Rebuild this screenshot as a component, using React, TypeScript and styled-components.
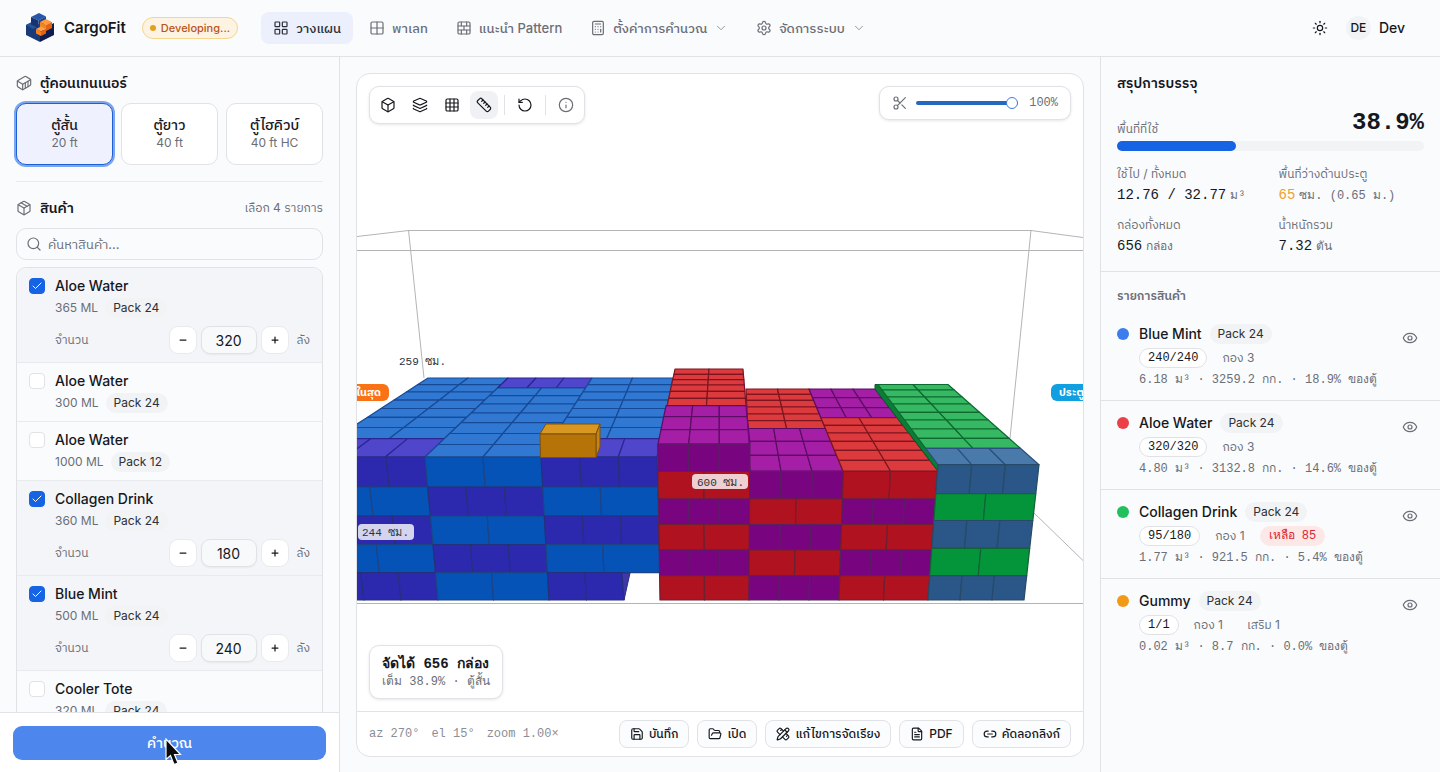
import React from "react";
import styled, { createGlobalStyle, css } from "styled-components";
import {
  Box, BrickWall, Calculator, Check, ChevronDown, Container, Eye, FileText, FolderOpen, Grid2x2, Grid3x3,
  Info, Layers, LayoutGrid, Link2, Minus, Package, PencilRuler, Plus, RotateCcw, Ruler, Save, Scissors,
  Search, Settings, Sun,
} from "lucide-react";

const sans = `Inter, "IBM Plex Sans Thai", "Noto Sans Thai", "Noto Sans", "Loma", sans-serif`;
const mono = `"Liberation Mono", "Tlwg Mono", "FreeMono", "DejaVu Sans Mono", monospace`;

const c = {
  ink: "#16181d",
  muted: "#6a6e76",
  line: "#e0e2e6",
  soft: "#e8eaee",
  chip: "#f2f3f5",
  panel: "#fafbfd",
  blue: "#1664e3",
};

const GlobalStyle = createGlobalStyle`
  *, *::before, *::after { box-sizing: border-box; }
  body { margin: 0; background: ${c.panel}; color: ${c.ink}; font: 400 14px/20px ${sans}; }
  button, input { font: inherit; color: inherit; margin: 0; }
  button { cursor: pointer; }
  h1, h2, h3, p, ul, dl, dd { margin: 0; padding: 0; }
  svg { flex: none; }
`;

const Page = styled.div`
  display: grid;
  grid-template: auto minmax(0, 1fr) / 340px minmax(0, 1fr) 340px;
  height: 100vh;
`;

/* ---------- header ---------- */
const Header = styled.header`
  grid-column: 1 / -1;
  display: flex;
  align-items: center;
  height: 57px;
  padding: 0 35px 0 24px;
  border-bottom: 1px solid ${c.line};
`;
const Brand = styled.a`
  display: flex;
  align-items: center;
  gap: 8px;
  color: ${c.ink};
  font: 600 15px/24px ${sans};
  text-decoration: none;
`;
const StageBadge = styled.span`
  display: flex;
  align-items: center;
  gap: 5px;
  height: 22px;
  margin: 0 23px 0 16px;
  padding: 0 7px;
  border: 1px solid #f6d58c;
  border-radius: 11px;
  background: #fdf3e3;
  color: #b9541a;
  font-size: 11px;
  font-weight: 500;
  &::before { content: ""; width: 6px; height: 6px; border-radius: 50%; background: #e2a01c; }
`;
const Nav = styled.nav`
  display: flex;
  gap: 4px;
  flex: 1;
`;
const NavLink = styled.a<{ $active?: boolean }>`
  display: flex;
  align-items: center;
  gap: 7px;
  height: 32px;
  padding: 0 12px;
  border-radius: 8px;
  color: ${(p) => (p.$active ? "#2b2f3a" : c.muted)};
  background: ${(p) => (p.$active ? "#ebf0fc" : "transparent")};
  font-size: 13px;
  font-weight: 500;
  text-decoration: none;
  white-space: nowrap;
`;
const IconButton = styled.button<{ $active?: boolean; $muted?: boolean }>`
  display: grid;
  place-items: center;
  width: 28px;
  height: 28px;
  padding: 0;
  border: 0;
  border-radius: 8px;
  background: ${(p) => (p.$active ? "#f0f1f4" : "transparent")};
  color: ${(p) => (p.$muted ? c.muted : c.ink)};
`;
const Account = styled.button`
  display: flex;
  align-items: center;
  gap: 8px;
  margin-left: 12px;
  padding: 0;
  border: 0;
  background: none;
  font-weight: 500;
`;
const Avatar = styled.span`
  width: 25px;
  border-radius: 50%;
  background: ${c.chip};
  font-size: 12px;
  line-height: 24px;
  text-align: center;
`;

/* ---------- left column ---------- */
const Sidebar = styled.aside`
  display: flex;
  flex-direction: column;
  min-height: 0;
  border-right: 1px solid ${c.line};
`;
const SidebarBody = styled.div`
  flex: 1;
  min-height: 0;
  overflow: hidden;
  padding: 16px;
`;
const SectionHead = styled.div`
  display: flex;
  align-items: center;
  gap: 8px;
  color: ${c.muted};
  height: 20px;
`;
const SectionTitle = styled.h2`
  flex: 1;
  color: ${c.ink};
  font: 600 14px/20px ${sans};
`;
const Small = styled.span`
  color: ${c.muted};
  font-size: 12px;
  font-weight: 400;
`;
const SizeRow = styled.div`
  display: grid;
  grid-template-columns: repeat(3, 1fr);
  gap: 8px;
  margin: 10px 0 16px;
`;
const SizeCard = styled.button<{ $active?: boolean }>`
  display: flex;
  flex-direction: column;
  align-items: center;
  justify-content: center;
  height: 62px;
  padding: 0;
  border: 1px solid ${c.line};
  border-radius: 10px;
  background: #fff;
  font-weight: 500;
  line-height: 18px;
  ${(p) => p.$active && css`
    border-color: #1d5fd6;
    background: #eff2fe;
    box-shadow: 0 0 0 2px #7ba6ee;
  `}
`;
const Rule = styled.hr`
  height: 1px;
  margin: 0 0 16px;
  border: 0;
  background: ${c.soft};
`;
const SearchBox = styled.label`
  display: flex;
  align-items: center;
  gap: 6px;
  height: 32px;
  margin: 10px 0 7px;
  padding: 0 9px;
  border: 1px solid ${c.line};
  border-radius: 10px;
  color: ${c.muted};
`;
const SearchInput = styled.input`
  flex: 1;
  min-width: 0;
  padding: 0;
  border: 0;
  outline: 0;
  background: none;
  font-size: 13px;
  &::placeholder { color: ${c.muted}; opacity: 1; }
`;
const ProductList = styled.ul`
  border: 1px solid ${c.line};
  border-radius: 10px 10px 0 0;
  overflow: hidden;
  list-style: none;
`;
const ProductItem = styled.li<{ $on: boolean }>`
  display: flex;
  gap: 10px;
  padding: 8px 12px;
  border-bottom: 1px solid ${c.soft};
  background: ${(p) => (p.$on ? "#f4f5f9" : "transparent")};
`;
const Tick = styled.span`
  display: grid;
  height: 16px;
  margin-top: 2px;
  > * { grid-area: 1 / 1; place-self: center; }
  svg { color: #fff; pointer-events: none; }
`;
const TickInput = styled.input`
  appearance: none;
  width: 16px;
  height: 16px;
  border: 1px solid ${c.line};
  border-radius: 4px;
  background: #fff;
  &:checked { border-color: ${c.blue}; background: ${c.blue}; }
`;
const ProductBody = styled.div`
  flex: 1;
  min-width: 0;
`;
const Name = styled.label`
  display: block;
  font-weight: 500;
`;
const Meta = styled.div`
  display: flex;
  align-items: center;
  gap: 7px;
  height: 20px;
  margin-top: 2px;
`;
const Chip = styled.span`
  padding: 0 8px;
  border-radius: 10px;
  background: ${c.chip};
  color: #2d3037;
  font-size: 12px;
  line-height: 20px;
`;
const Quantity = styled.div`
  display: flex;
  align-items: center;
  gap: 4px;
  margin-top: 8px;
  label { flex: 1; color: ${c.muted}; font-size: 12px; }
  > span { margin-left: 4px; }
`;
const Step = styled.button`
  display: grid;
  place-items: center;
  width: 28px;
  height: 28px;
  padding: 0;
  border: 1px solid ${c.soft};
  border-radius: 9px;
  background: #fff;
`;
const QuantityInput = styled.input`
  width: 56px;
  height: 28px;
  padding: 0;
  border: 1px solid ${c.line};
  border-radius: 9px;
  background: #f8f9fb;
  box-shadow: 0 1px 2px #0000000d;
  text-align: center;
`;
const ActionBar = styled.div`
  padding: 13px 13px 12px;
  border-top: 1px solid ${c.line};
  background: #fff;
`;
const Primary = styled.button`
  position: relative;
  width: 100%;
  height: 34px;
  border: 0;
  border-radius: 9px;
  background: #4d86ec;
  color: #fff;
  font-weight: 500;
`;
const Pointer = styled.svg`
  position: absolute;
  top: 12px;
  left: calc(50% - 6px);
`;

/* ---------- centre ---------- */
const Main = styled.main`
  min-width: 0;
  min-height: 0;
  padding: 16px 16px 15px;
`;
const Viewer = styled.section`
  display: flex;
  flex-direction: column;
  height: 100%;
  border: 1px solid ${c.line};
  border-radius: 14px;
  background: #fff;
  overflow: hidden;
`;
const Stage = styled.div`
  position: relative;
  flex: 1;
  min-height: 0;
`;
const Scene = styled.svg`
  display: block;
  width: 100%;
  height: 100%;
`;
const floating = css`
  position: absolute;
  border: 1px solid ${c.line};
  border-radius: 10px;
  background: #fff;
  box-shadow: 0 1px 3px #0000001a;
`;
const Tools = styled.div`
  ${floating}
  top: 12px;
  left: 12px;
  display: flex;
  align-items: center;
  gap: 4px;
  padding: 4px;
`;
const Divider = styled.span`
  width: 1px;
  height: 20px;
  margin: 0 2px;
  background: ${c.line};
`;
const Slice = styled.label`
  ${floating}
  top: 12px;
  right: 12px;
  display: flex;
  align-items: center;
  gap: 8px;
  height: 34px;
  padding: 0 12px;
  color: ${c.muted};
  font: 12px/16px ${mono};
`;
const Slider = styled.input`
  appearance: none;
  width: 102px;
  height: 14px;
  margin-right: 3px;
  background: none;
  &::-webkit-slider-runnable-track { height: 4px; border-radius: 2px; background: #2468c0; }
  &::-webkit-slider-thumb {
    appearance: none;
    width: 12px;
    height: 12px;
    margin-top: -4px;
    border: 1px solid #3b7be0;
    border-radius: 50%;
    background: #fff;
  }
`;
const Result = styled.div`
  ${floating}
  bottom: 12px;
  left: 12px;
  padding: 8px 12px;
  font: 12px/16px ${mono};
  color: ${c.muted};
  white-space: nowrap;
  strong { display: block; color: ${c.ink}; font-size: 14px; line-height: 20px; }
`;
const ViewerFoot = styled.footer`
  display: flex;
  align-items: center;
  gap: 12px;
  height: 45px;
  padding: 0 12px;
  border-top: 1px solid ${c.line};
  color: #8a8e96;
  font: 12px/16px ${mono};
  white-space: nowrap;
`;
const Actions = styled.div`
  display: flex;
  gap: 8px;
  margin-left: auto;
`;
const FootButton = styled.button`
  display: flex;
  align-items: center;
  gap: 5px;
  height: 28px;
  padding: 0 10px;
  border: 1px solid ${c.line};
  border-radius: 8px;
  background: #fbfcfd;
  color: ${c.ink};
  font: 500 12px/20px ${sans};
`;

/* ---------- right column ---------- */
const Summary = styled.aside`
  min-height: 0;
  overflow: hidden;
  border-left: 1px solid ${c.line};
`;
const Totals = styled.section`
  padding: 16px 16px 14px;
  border-bottom: 1px solid ${c.line};
`;
const Usage = styled.div`
  display: flex;
  align-items: flex-end;
  justify-content: space-between;
  margin: 14px 0 2px;
  strong { font: 700 24px/32px ${mono}; }
`;
const Bar = styled.div`
  height: 10px;
  border-radius: 5px;
  background: ${c.chip};
`;
const BarFill = styled.div`
  height: 100%;
  border-radius: 5px;
  background: ${c.blue};
`;
const Figures = styled.dl`
  display: grid;
  grid-template-columns: 1fr 1fr;
  gap: 9px 16px;
  margin-top: 13px;
  dt { color: ${c.muted}; font-size: 12px; line-height: 20px; }
`;
const Figure = styled.dd<{ $warn?: boolean }>`
  height: 22px;
  color: ${(p) => (p.$warn ? "#eda12a" : c.ink)};
  font: 500 14px/22px ${mono};
  white-space: nowrap;
  small { margin-left: 4px; color: ${c.muted}; font-size: 12px; font-weight: 400; }
`;
const ListTitle = styled.h3`
  padding: 14px 16px 6px;
  color: ${c.muted};
  font: 600 12px/20px ${sans};
`;
const Loads = styled.ul`
  list-style: none;
`;
const Load = styled.li`
  display: flex;
  gap: 10px;
  padding: 12px 16px 11px;
  border-bottom: 1px solid ${c.line};
  &:last-child { border-bottom: 0; }
`;
const Dot = styled.span<{ $color: string }>`
  width: 12px;
  height: 12px;
  margin-top: 4px;
  border-radius: 50%;
  background: ${(p) => p.$color};
`;
const LoadBody = styled.div`
  flex: 1;
  min-width: 0;
`;
const LoadHead = styled.div`
  display: flex;
  gap: 8px;
  font-weight: 500;
  ${Chip} { font-weight: 400; }
`;
const Tags = styled.div`
  display: flex;
  gap: 6px;
  margin: 4px 0 3px;
`;
const Tag = styled.span<{ $kind?: "count" | "left" }>`
  height: 20px;
  padding: 0 9px;
  border-radius: 10px;
  color: ${c.muted};
  font-size: 12px;
  line-height: 20px;
  ${(p) => p.$kind === "count" && css`
    padding: 0 8px;
    border: 1px solid ${c.line};
    background: #fff;
    color: ${c.ink};
    font-family: ${mono};
    line-height: 18px;
  `}
  ${(p) => p.$kind === "left" && css`
    background: #fde8e8;
    color: #d92532;
    font-family: ${mono};
  `}
`;
const Detail = styled.p`
  color: ${c.muted};
  font: 12px/18px ${mono};
  white-space: nowrap;
`;
const EyeButton = styled(IconButton)`
  align-self: flex-start;
`;

/* ---------- 3D load drawing ---------- */
type Edge = [number, number, number, number];
type Band = { cols: number; fill: string; ys: number[] };

const at = ([x0, y0, x1, y1]: Edge, y: number) => x0 + ((x1 - x0) * (y - y0)) / (y1 - y0);

const BLUE_T = "#3078d2", INDIGO_T = "#5046cc", RED_T = "#dc3a3c", PLUM_T = "#a41fa6", GREEN_T = "#37b964", STEEL_T = "#4a7aaa";
const BLUE = "#0553b6", INDIGO = "#2c29ae", RED = "#b01220", PLUM = "#78047f", GREEN = "#04943a", STEEL = "#2a5787";
const edgeOf: Record<string, string> = {
  [BLUE_T]: "#174a96", [INDIGO_T]: "#2b2590", [RED_T]: "#7d1520", [PLUM_T]: "#5b0d62", [GREEN_T]: "#0d6a30", [STEEL_T]: "#2a5080",
  [BLUE]: "#1d4384", [INDIGO]: "#25307c", [RED]: "#6c2030", [PLUM]: "#572060", [GREEN]: "#136336", [STEEL]: "#274a66",
};

/* One face of a stack: every band is cut into equal columns between its two slanted edges. */
function Face({ left, right, bands }: { left: Edge; right: Edge; bands: Band[] }) {
  return (
    <g strokeWidth={1.2} strokeLinejoin="round">
      {bands.flatMap((b, bi) =>
        b.ys.slice(1).flatMap((y1, ri) => {
          const y0 = b.ys[ri];
          return Array.from({ length: b.cols }, (_, i) => {
            const x = (k: number, y: number) => {
              const l = at(left, y);
              return l + ((at(right, y) - l) * k) / b.cols;
            };
            const pts = [[x(i, y0), y0], [x(i + 1, y0), y0], [x(i + 1, y1), y1], [x(i, y1), y1]];
            return (
              <polygon key={`${bi}-${ri}-${i}`} points={pts.map((p) => p.map((n) => n.toFixed(1)).join(",")).join(" ")} fill={b.fill} stroke={edgeOf[b.fill]} />
            );
          });
        })
      )}
    </g>
  );
}

const layers = (ys: number[], kinds: [string, number][]): Band[] =>
  kinds.map(([fill, cols], i) => ({ fill, cols, ys: [ys[i], ys[i + 1]] }));

const backRows = [378, 384.6, 392, 400.2, 408.5, 417.4, 427.5, 438.6];
const leftYs = [457, 487, 516, 544.7, 572.7, 600];
const midYs = [444, 471.5, 499, 524.5, 550, 575.6, 600];
const endYs = [464.7, 493.7, 520.5, 548.4, 575.6, 600];

const edge = {
  a: [428, 378, 306, 457] as Edge,
  b: [508, 378, 425, 457] as Edge,
  c: [592, 378, 541, 457] as Edge,
  d: [673, 378, 657, 457] as Edge,
  r1l: [675, 369, 667, 406] as Edge,
  r1r: [743, 369, 746, 406] as Edge,
  m1l: [666, 406, 658, 444] as Edge,
  m1r: [746, 406, 750, 444] as Edge,
  r2l: [746, 389, 750, 471] as Edge,
  r2r: [809, 389, 843, 471] as Edge,
  r3r: [875, 389, 938, 471] as Edge,
  g1: [878, 384.5, 938, 464.7] as Edge,
  g2: [948, 384.5, 1039, 464.7] as Edge,
  fa: [308, 457, 327, 600] as Edge,
  fb: [425, 457, 438, 600] as Edge,
  fc: [541, 457, 549, 600] as Edge,
  fd: [657, 457, 661, 600] as Edge,
  f1: [657.5, 444, 660, 600] as Edge,
  f2: [750, 444, 749, 600] as Edge,
  f3: [843.5, 471, 839, 600] as Edge,
  f4: [938, 465, 928, 600] as Edge,
  f5: [1039, 465, 1024, 600] as Edge,
};

const SceneText = styled.text<{ $tag?: boolean }>`
  fill: ${(p) => (p.$tag ? "#fff" : "#2d333d")};
  font: ${(p) => (p.$tag ? `700 11px ${sans}` : `11px ${mono}`)};
`;

function LoadScene() {
  return (
    <Scene viewBox="357 74 726 637" preserveAspectRatio="xMidYMid slice" role="img" aria-label="ตู้สั้น 20 ft">
      <g stroke="#b2b4b6" strokeWidth={1} fill="none">
        <path d="M357 236.500L408.500 230.500H1031L1083 237.500M357 250.500H1083M408.500 230L424 378M1031 230L1010 438M1034 513L1083 560.500M357 603.500H1083" />
      </g>

      <Face left={edge.a} right={edge.b} bands={[{ cols: 2, fill: BLUE_T, ys: backRows }, { cols: 3, fill: INDIGO_T, ys: [438.6, 457] }]} />
      <Face left={edge.b} right={edge.c} bands={[{ cols: 3, fill: INDIGO_T, ys: [378, 388] }, { cols: 2, fill: BLUE_T, ys: [388, 395.6, 404, 413, 422.7, 433.5, 444.500, 457] }]} />
      <Face left={edge.c} right={edge.d} bands={[{ cols: 2, fill: BLUE_T, ys: backRows }, { cols: 3, fill: INDIGO_T, ys: [438.6, 457] }]} />
      <Face left={edge.fa} right={edge.fb} bands={layers(leftYs, [[INDIGO, 3], [BLUE, 2], [INDIGO, 3], [BLUE, 2], [INDIGO, 3]])} />
      <Face left={edge.fb} right={edge.fc} bands={layers(leftYs, [[BLUE, 2], [INDIGO, 3], [BLUE, 2], [INDIGO, 3], [BLUE, 2]])} />
      <Face left={edge.fc} right={edge.fd} bands={layers(leftYs.slice(0, 5), [[INDIGO, 3], [BLUE, 2], [INDIGO, 3], [BLUE, 2]])} />
      <Face left={edge.fc} right={[622, 572.7, 624, 600]} bands={layers(leftYs.slice(4), [[INDIGO, 2]])} />
      <polygon points="622,573 630,573 624,600" fill="#4037a8" stroke="#25307c" />

      <Face left={edge.r2l} right={edge.r2r} bands={[{ cols: 2, fill: RED_T, ys: [389, 394.3, 400.3, 407, 414, 420.7, 428.5] }, { cols: 3, fill: PLUM_T, ys: [428.5, 441.3, 455.3, 471] }]} />
      <Face left={edge.r2r} right={edge.r3r} bands={[{ cols: 3, fill: PLUM_T, ys: [389, 397.7, 407.7, 417.7] }, { cols: 2, fill: RED_T, ys: [417.7, 425.3, 433, 441.3, 450.3, 460.3, 471] }]} />
      <Face left={edge.r1l} right={edge.r1r} bands={[{ cols: 2, fill: RED_T, ys: [369, 374.3, 379.7, 385, 391.3, 398.3, 405.7] }]} />
      <Face left={edge.m1l} right={edge.m1r} bands={[{ cols: 3, fill: PLUM_T, ys: [405.7, 416.7, 429.7, 444] }]} />
      <polygon points="743,369 750,444 750,471 746,406" fill={PLUM} />
      <Face left={edge.f1} right={edge.f2} bands={layers(midYs, [[PLUM, 3], [RED, 2], [PLUM, 3], [RED, 2], [PLUM, 3], [RED, 2]])} />
      <Face left={edge.f2} right={edge.f3} bands={layers(midYs.slice(1), [[PLUM, 3], [RED, 2], [PLUM, 3], [RED, 2], [PLUM, 3]])} />
      <Face left={edge.f3} right={edge.f4} bands={layers(midYs.slice(1), [[RED, 2], [PLUM, 3], [RED, 2], [PLUM, 3], [RED, 2]])} />

      <polygon points="875,384.500 879,384.500 927,448.500 938,464.700 938,471 875,389" fill="#0b7d36" stroke="#0d5a2c" />
      <Face left={edge.g1} right={edge.g2} bands={[{ cols: 2, fill: GREEN_T, ys: [384.5, 390, 397, 404, 412.3, 420, 429, 438.3, 448.3] }, { cols: 3, fill: STEEL_T, ys: [448.3, 464.7] }]} />
      <Face left={edge.f4} right={edge.f5} bands={layers(endYs, [[STEEL, 3], [GREEN, 2], [STEEL, 3], [GREEN, 2], [STEEL, 3]])} />

      <g stroke="#7a500c" strokeLinejoin="round">
        <path d="M540 434L546 424H600L596 434Z" fill="#d99721" />
        <path d="M596 434L600 424V447L596 457.500Z" fill="#c88312" />
        <path d="M540 434H596V457.500H540.500Z" fill="#b67408" />
      </g>

      <SceneText x={399} y={365}>259 ซม.</SceneText>
      <rect x={358} y={524} width={56} height={16} rx={4} fill="#fff" fillOpacity={0.8} />
      <SceneText x={362} y={536}>244 ซม.</SceneText>
      <rect x={692} y={474} width={56} height={15} rx={4} fill="#fff" fillOpacity={0.8} />
      <SceneText x={697} y={486}>600 ซม.</SceneText>
      <rect x={340} y={384} width={49} height={17} rx={6} fill="#f97316" />
      <SceneText $tag x={381} y={396} textAnchor="end">ในสุด</SceneText>
      <rect x={1051} y={384} width={50} height={17} rx={6} fill="#109fe0" />
      <SceneText $tag x={1059} y={396}>ประตู</SceneText>
    </Scene>
  );
}

const Logo = () => (
  <svg width="32" height="32" viewBox="0 0 32 32" aria-hidden="true">
    <path d="M2 13L9 9.500L16 13V30L2 23Z" fill="#183a78" />
    <path d="M16 18L30 11V23L16 30Z" fill="#101d52" />
    <path d="M2 13L9 9.500L16 13.500L9 17Z" fill="#2453a0" />
    <path d="M7 5L15 1L22 4.500L14.500 8.500Z" fill="#2658a8" />
    <path d="M7 5L14.500 8.500V16L7 12.500Z" fill="#173470" />
    <path d="M14.500 8.500L22 4.500V12L14.500 16Z" fill="#1b4288" />
    <path d="M16 10L22 7L28 10L22 13Z" fill="#ff9a3d" />
    <path d="M16 10L22 13V19L16 16Z" fill="#f5811f" />
    <path d="M22 13L28 10V16L22 19Z" fill="#e5630f" />
    <path d="M12 17L17 14.500L22 17L17 19.500Z" fill="#ffa048" />
    <path d="M12 17L17 19.500V24L12 21.500Z" fill="#f5811f" />
    <path d="M17 19.500L22 17V21.500L17 24Z" fill="#e5630f" />
  </svg>
);

const ic = { size: 16, strokeWidth: 1.8 };

const sizes = [["ตู้สั้น", "20 ft"], ["ตู้ยาว", "40 ft"], ["ตู้ไฮคิวบ์", "40 ft HC"]];
const products: { name: string; volume: string; pack: string; qty?: number }[] = [
  { name: "Aloe Water", volume: "365 ML", pack: "Pack 24", qty: 320 },
  { name: "Aloe Water", volume: "300 ML", pack: "Pack 24" },
  { name: "Aloe Water", volume: "1000 ML", pack: "Pack 12" },
  { name: "Collagen Drink", volume: "360 ML", pack: "Pack 24", qty: 180 },
  { name: "Blue Mint", volume: "500 ML", pack: "Pack 24", qty: 240 },
  { name: "Cooler Tote", volume: "320 ML", pack: "Pack 24" },
];
const loads = [
  { name: "Blue Mint", color: "#3b7ded", count: "240/240", tags: ["กอง 3"], detail: "6.18 ม³ · 3259.2 กก. · 18.9% ของตู้" },
  { name: "Aloe Water", color: "#ec4048", count: "320/320", tags: ["กอง 3"], detail: "4.80 ม³ · 3132.8 กก. · 14.6% ของตู้" },
  { name: "Collagen Drink", color: "#22c05c", count: "95/180", tags: ["กอง 1"], left: "เหลือ 85", detail: "1.77 ม³ · 921.5 กก. · 5.4% ของตู้" },
  { name: "Gummy", color: "#f29a18", count: "1/1", tags: ["กอง 1", "เสริม 1"], detail: "0.02 ม³ · 8.7 กก. · 0.0% ของตู้" },
];

export default function App() {
  const usage = 38.9;
  return (
    <>
      <GlobalStyle />
      <Page>
        <Header>
          <Brand href="#"><Logo />CargoFit</Brand>
          <StageBadge>Developing...</StageBadge>
          <Nav>
            <NavLink href="#" $active><LayoutGrid {...ic} />วางแผน</NavLink>
            <NavLink href="#"><Grid2x2 {...ic} />พาเลท</NavLink>
            <NavLink href="#"><BrickWall {...ic} />แนะนำ Pattern</NavLink>
            <NavLink href="#"><Calculator {...ic} />ตั้งค่าการคำนวณ<ChevronDown size={14} strokeWidth={1.2} /></NavLink>
            <NavLink href="#"><Settings {...ic} />จัดการระบบ<ChevronDown size={14} strokeWidth={1.2} /></NavLink>
          </Nav>
          <IconButton aria-label="ธีม"><Sun {...ic} /></IconButton>
          <Account><Avatar>DE</Avatar>Dev</Account>
        </Header>

        <Sidebar>
          <SidebarBody>
            <SectionHead><Container {...ic} /><SectionTitle>ตู้คอนเทนเนอร์</SectionTitle></SectionHead>
            <SizeRow>
              {sizes.map(([name, feet], i) => (
                <SizeCard key={name} $active={i === 0}>{name}<Small>{feet}</Small></SizeCard>
              ))}
            </SizeRow>
            <Rule />
            <SectionHead><Package {...ic} /><SectionTitle>สินค้า</SectionTitle><Small>เลือก 4 รายการ</Small></SectionHead>
            <SearchBox><Search {...ic} /><SearchInput type="search" aria-label="ค้นหาสินค้า" placeholder="ค้นหาสินค้า..." /></SearchBox>
            <ProductList>
              {products.map((p, i) => (
                <ProductItem key={i} $on={!!p.qty}>
                  <Tick>
                    <TickInput type="checkbox" id={`product-${i}`} defaultChecked={!!p.qty} />
                    {p.qty && <Check size={12} strokeWidth={2} />}
                  </Tick>
                  <ProductBody>
                    <Name htmlFor={`product-${i}`}>{p.name}</Name>
                    <Meta><Small>{p.volume}</Small><Chip>{p.pack}</Chip></Meta>
                    {p.qty && (
                      <Quantity>
                        <label htmlFor={`qty-${i}`}>จำนวน</label>
                        <Step aria-label="ลด"><Minus size={10} strokeWidth={3} /></Step>
                        <QuantityInput id={`qty-${i}`} inputMode="numeric" defaultValue={p.qty} />
                        <Step aria-label="เพิ่ม"><Plus size={10} strokeWidth={3} /></Step>
                        <Small>ลัง</Small>
                      </Quantity>
                    )}
                  </ProductBody>
                </ProductItem>
              ))}
            </ProductList>
          </SidebarBody>
          <ActionBar>
            <Primary>
              คำนวณ
              <Pointer width="20" height="30" viewBox="0 0 20 30" aria-hidden="true">
                <path d="M2 1V21.500L6.500 17.500L10 26.500L14 25L10.500 16.500H16.500Z" fill="#0b0b0b" stroke="#fff" strokeWidth={1.2} />
              </Pointer>
            </Primary>
          </ActionBar>
        </Sidebar>

        <Main>
          <Viewer>
            <Stage>
              <LoadScene />
              <Tools>
                <IconButton aria-label="3D"><Box {...ic} /></IconButton>
                <IconButton aria-label="ชั้น"><Layers {...ic} /></IconButton>
                <IconButton aria-label="ตาราง"><Grid3x3 {...ic} /></IconButton>
                <IconButton aria-label="ขนาด" $active><Ruler {...ic} /></IconButton>
                <Divider />
                <IconButton aria-label="รีเซ็ต"><RotateCcw {...ic} /></IconButton>
                <Divider />
                <IconButton aria-label="ข้อมูล" $muted><Info {...ic} /></IconButton>
              </Tools>
              <Slice>
                <Scissors {...ic} />
                <Slider type="range" aria-label="ตัดขวาง" min={0} max={100} defaultValue={100} />
                100%
              </Slice>
              <Result><strong>จัดได้ 656 กล่อง</strong>เต็ม 38.9% · ตู้สั้น</Result>
            </Stage>
            <ViewerFoot>
              <span>az 270°</span><span>el 15°</span><span>zoom 1.00×</span>
              <Actions>
                <FootButton><Save size={14} strokeWidth={2} />บันทึก</FootButton>
                <FootButton><FolderOpen size={14} strokeWidth={2} />เปิด</FootButton>
                <FootButton><PencilRuler size={14} strokeWidth={2} />แก้ไขการจัดเรียง</FootButton>
                <FootButton><FileText size={14} strokeWidth={2} />PDF</FootButton>
                <FootButton><Link2 size={14} strokeWidth={2} />คัดลอกลิงก์</FootButton>
              </Actions>
            </ViewerFoot>
          </Viewer>
        </Main>

        <Summary>
          <Totals>
            <SectionTitle>สรุปการบรรจุ</SectionTitle>
            <Usage><Small>พื้นที่ที่ใช้</Small><strong>{usage}%</strong></Usage>
            <Bar><BarFill style={{ width: `${usage}%` }} /></Bar>
            <Figures>
              <div><dt>ใช้ไป / ทั้งหมด</dt><Figure>12.76 / 32.77<small>ม³</small></Figure></div>
              <div><dt>พื้นที่ว่างด้านประตู</dt><Figure $warn>65<small>ซม. (0.65 ม.)</small></Figure></div>
              <div><dt>กล่องทั้งหมด</dt><Figure>656<small>กล่อง</small></Figure></div>
              <div><dt>น้ำหนักรวม</dt><Figure>7.32<small>ตัน</small></Figure></div>
            </Figures>
          </Totals>
          <ListTitle>รายการสินค้า</ListTitle>
          <Loads>
            {loads.map((l) => (
              <Load key={l.name}>
                <Dot $color={l.color} />
                <LoadBody>
                  <LoadHead>{l.name}<Chip>Pack 24</Chip></LoadHead>
                  <Tags>
                    <Tag $kind="count">{l.count}</Tag>
                    {l.tags.map((t) => <Tag key={t}>{t}</Tag>)}
                    {l.left && <Tag $kind="left">{l.left}</Tag>}
                  </Tags>
                  <Detail>{l.detail}</Detail>
                </LoadBody>
                <EyeButton $muted aria-label="แสดง"><Eye {...ic} /></EyeButton>
              </Load>
            ))}
          </Loads>
        </Summary>
      </Page>
    </>
  );
}
